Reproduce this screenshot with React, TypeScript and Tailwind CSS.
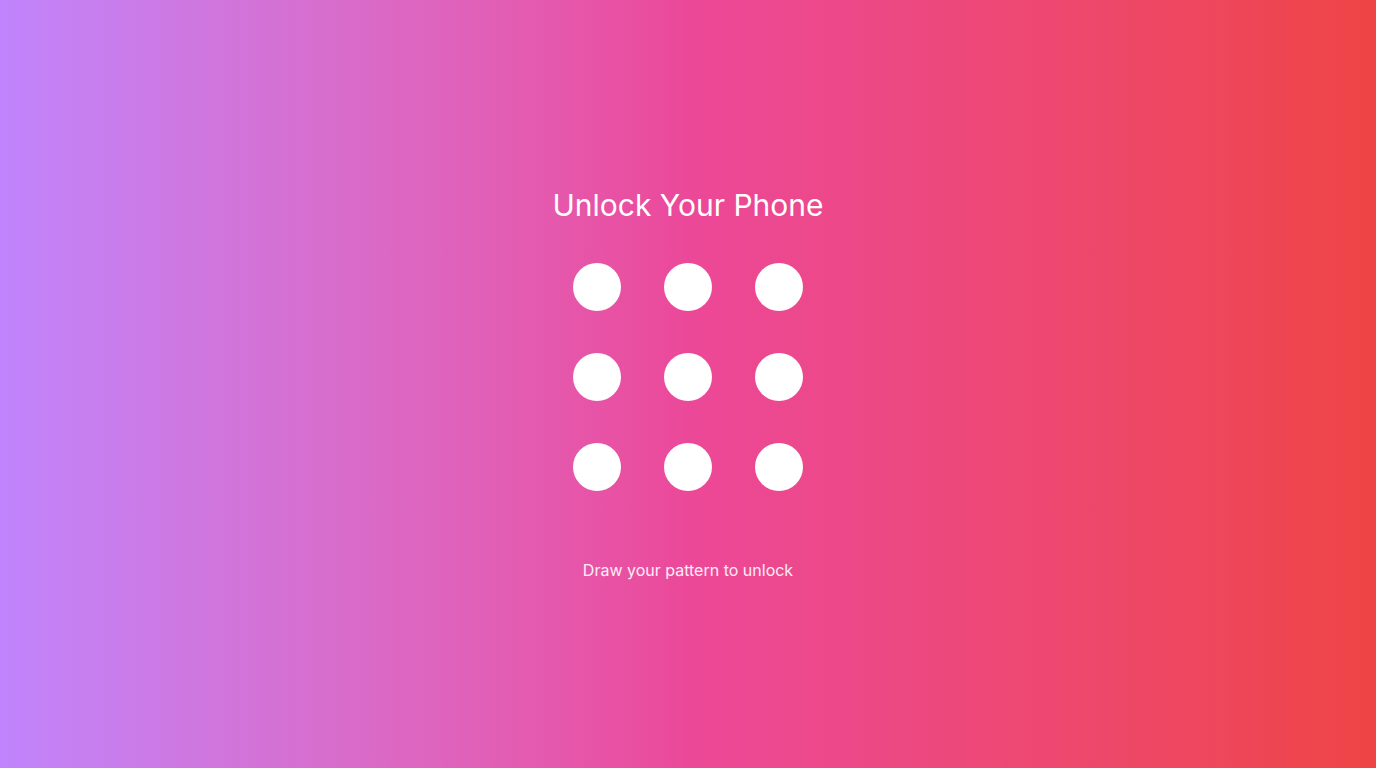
const dots = Array.from({ length: 9 }, (_, i) => i);

function App() {
  return (
    <div
      className="flex h-screen w-full flex-col items-center justify-center bg-gradient-to-r from-[#c084fc] via-[#ec4899] to-[#ef4444] text-white"
      style={{ fontFamily: "Inter, 'Noto Sans', sans-serif" }}
    >
      <h1 className="mb-10 text-3xl font-normal leading-9">Unlock Your Phone</h1>
      <div className="grid grid-cols-3 gap-x-[43px] gap-y-[42px]">
        {dots.map((d) => (
          <div key={d} className="h-12 w-12 rounded-full bg-white" />
        ))}
      </div>
      <p className="mt-[67px] text-base leading-6 text-white/90">
        Draw your pattern to unlock
      </p>
    </div>
  );
}

export default App;
